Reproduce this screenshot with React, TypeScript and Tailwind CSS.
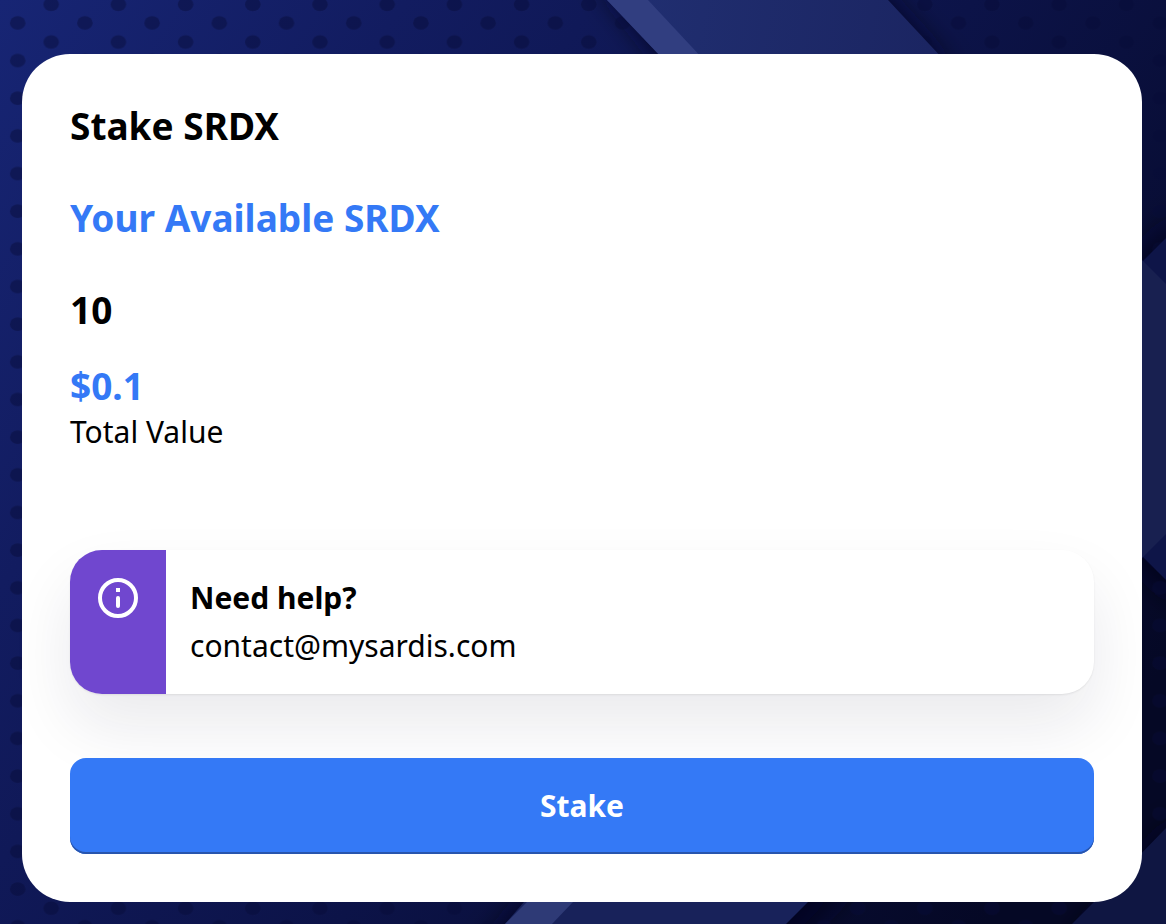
function Backdrop() {
  return (
    <svg
      className="absolute inset-0 h-full w-full"
      viewBox="0 0 1166 924"
      preserveAspectRatio="none"
      aria-hidden="true"
    >
      <defs>
        <linearGradient id="base" gradientUnits="userSpaceOnUse" x1="0" y1="0" x2="1100" y2="760">
          <stop offset="0" stopColor="#172574" />
          <stop offset="0.25" stopColor="#121c60" />
          <stop offset="0.6" stopColor="#0c1348" />
          <stop offset="1" stopColor="#050825" />
        </linearGradient>
        <linearGradient id="bandTop" gradientUnits="userSpaceOnUse" x1="640" y1="0" x2="930" y2="50">
          <stop offset="0" stopColor="#202e70" />
          <stop offset="1" stopColor="#1b2562" />
        </linearGradient>
        <pattern id="dots" patternUnits="userSpaceOnUse" width="67.2" height="37.66">
          <ellipse cx="17.7" cy="23" rx="7.8" ry="6.8" fill="#060a38" fillOpacity="0.45" />
          <ellipse cx="51.2" cy="4.4" rx="7.8" ry="6.8" fill="#060a38" fillOpacity="0.45" />
          <ellipse cx="51.2" cy="42.06" rx="7.8" ry="6.8" fill="#060a38" fillOpacity="0.45" />
        </pattern>
        <filter id="soft" x="-50%" y="-50%" width="200%" height="200%">
          <feGaussianBlur stdDeviation="14" />
        </filter>
      </defs>
      <rect width="1166" height="924" fill="url(#base)" />
      <g filter="url(#soft)" fill="#03051f" fillOpacity="0.7">
        <path d="M596 -20 L872 -20 L954 70 L666 70 Z" />
        <path d="M540 880 L860 880 L790 950 L480 950 Z" />
        <path d="M1130 262 L1180 210 L1180 610 L1130 556 Z" />
        <path d="M1180 810 L1060 950 L1180 950 Z" />
      </g>
      <rect width="1166" height="924" fill="url(#dots)" />
      <path d="M607 0 H888 L944 60 H664 Z" fill="url(#bandTop)" />
      <path d="M607 0 H648 L704 60 H664 Z" fill="#313e80" />
      <path d="M1142 262 L1166 238 V580 L1142 556 Z" fill="#0e1548" />
      <path d="M1142 260 L1166 284 V534 L1142 558 Z" fill="#182050" />
      <path d="M524 902 H808 L786 924 H505 Z" fill="#18225a" />
      <path d="M527 902 H573 L552 924 H505 Z" fill="#2e3a76" />
      <path d="M1166 828 V924 H1072 L1100 896 Z" fill="#0f1642" />
    </svg>
  );
}

function InfoIcon() {
  return (
    <svg className="size-12" viewBox="0 0 48 48" fill="none" aria-hidden="true">
      <circle cx="24" cy="24" r="18" stroke="white" strokeWidth="4" />
      <rect x="22" y="14" width="4" height="4" fill="white" />
      <rect x="22" y="22" width="4" height="12" rx="2" fill="white" />
    </svg>
  );
}

export default function App() {
  return (
    <div className="relative min-h-screen overflow-hidden bg-[#0c1348] pt-[54px] pr-6 pb-[22px] pl-[22px] font-['Noto_Sans',sans-serif] text-black">
      <Backdrop />
      <main className="relative rounded-[48px] bg-white p-12">
        <h1 className="text-[37px] leading-12 font-bold">Stake SRDX</h1>
        <h2 className="mt-11 text-[37px] leading-12 font-bold text-[#3479f6]">Your Available SRDX</h2>
        <p className="mt-11 text-[37px] leading-12 font-bold">10</p>
        <p className="mt-7 text-[37px] leading-12 font-bold text-[#3479f6]">$0.1</p>
        <p className="text-3xl leading-11">Total Value</p>

        <section className="mt-24 flex rounded-[32px] bg-white shadow-[0_1px_2px_rgba(0,0,0,0.08),0_32px_64px_rgba(20,20,50,0.09)]">
          <div className="rounded-l-[32px] bg-[#7047cf] p-6">
            <InfoIcon />
          </div>
          <div className="p-6 text-3xl leading-12">
            <h3 className="font-bold">Need help?</h3>
            <a href="mailto:contact@mysardis.com" className="block">contact@mysardis.com</a>
          </div>
        </section>

        <button
          type="button"
          className="mt-16 h-24 w-full rounded-2xl bg-[#3479f6] text-3xl font-bold text-white shadow-[inset_0_-2px_0_#2855ad]"
        >
          Stake
        </button>
      </main>
    </div>
  );
}
